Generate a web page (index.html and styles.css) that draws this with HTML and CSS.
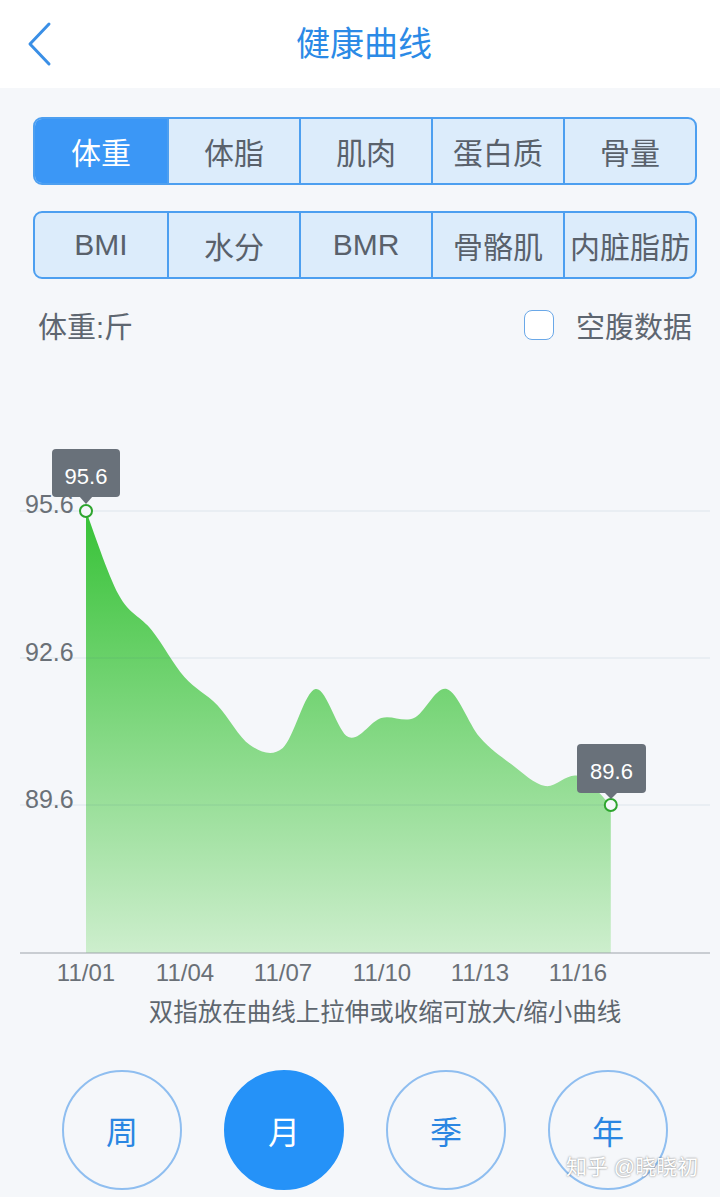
FILE: index.html
```html
<!DOCTYPE html>
<html lang="zh-CN">
<head>
  <meta charset="UTF-8">
  <meta name="viewport" content="width=device-width, initial-scale=1.0">
  <title>健康曲线</title>
  <link rel="stylesheet" href="styles.css">
</head>
<body>
  <header class="nav">
    <svg class="nav-back" width="30" height="46" viewBox="0 0 30 46">
      <polyline points="23,3 4,23 23,43"/>
    </svg>
    <h1 class="nav-title">健康曲线</h1>
  </header>

  <main class="page">
    <div class="tabs">
      <span class="tab tab-active">体重</span>
      <span class="tab">体脂</span>
      <span class="tab">肌肉</span>
      <span class="tab">蛋白质</span>
      <span class="tab">骨量</span>
    </div>
    <div class="tabs tabs-second">
      <span class="tab">BMI</span>
      <span class="tab">水分</span>
      <span class="tab">BMR</span>
      <span class="tab">骨骼肌</span>
      <span class="tab">内脏脂肪</span>
    </div>

    <div class="unit-row">
      <span class="unit">体重:斤</span>
      <label class="fasting"><span class="check"></span>空腹数据</label>
    </div>

    <!-- curve, drawn in page coordinates -->
    <svg class="chart" width="720" height="640" viewBox="0 355 720 640">
      <defs>
        <linearGradient id="area" x1="0" y1="511" x2="0" y2="953" gradientUnits="userSpaceOnUse">
          <stop offset="0" stop-color="#37c237"/>
          <stop offset="1" stop-color="#cdeecd"/>
        </linearGradient>
      </defs>

      <path class="area" d="M86,511 C91.5,525 107.9,575.2 118.8,595 C129.7,614.8 140.7,616.3 151.6,630 C162.5,643.7 173.5,664.5 184.4,677 C195.3,689.5 206.3,693.7 217.2,705 C228.1,716.3 239.1,737.8 250,745 C260.9,752.2 271.9,757.3 282.8,748 C293.7,738.7 304.7,690.8 315.6,689 C326.5,687.2 337.5,732.2 348.4,737 C359.3,741.8 370.3,721.2 381.2,718 C392.1,714.8 403.1,722.8 414,718 C424.9,713.2 435.9,685.8 446.8,689 C457.7,692.2 468.7,724.3 479.6,737 C490.5,749.7 501.5,756.8 512.4,765 C523.3,773.2 534.3,784.2 545.2,786 C556.1,787.8 567.1,772.8 578,776 C588.9,779.2 605.3,800.2 610.8,805 L610.8,953 L86,953 Z"/>

      <g class="grid">
        <line x1="20" y1="511" x2="710" y2="511"/>
        <line x1="20" y1="658" x2="710" y2="658"/>
        <line x1="20" y1="805" x2="710" y2="805"/>
      </g>
      <line class="axis" x1="20" y1="953" x2="710" y2="953"/>

      <g class="y-labels">
        <text x="25" y="513">95.6</text>
        <text x="25" y="661">92.6</text>
        <text x="25" y="808">89.6</text>
      </g>

      <g class="x-labels">
        <text x="86" y="981">11/01</text>
        <text x="185" y="981">11/04</text>
        <text x="283" y="981">11/07</text>
        <text x="382" y="981">11/10</text>
        <text x="480" y="981">11/13</text>
        <text x="578" y="981">11/16</text>
      </g>

      <circle class="dot" cx="86" cy="511" r="6"/>
      <circle class="dot" cx="610.8" cy="805" r="6"/>

      <g class="tip">
        <rect x="52" y="449" width="68" height="48" rx="4"/>
        <polygon points="79,496 93,496 86,504"/>
        <text x="86" y="484">95.6</text>
      </g>
      <g class="tip">
        <rect x="577" y="744" width="69" height="49" rx="4"/>
        <polygon points="604,792 618,792 611,799"/>
        <text x="611.5" y="779">89.6</text>
      </g>
    </svg>

    <p class="hint">双指放在曲线上拉伸或收缩可放大/缩小曲线</p>

    <div class="ranges">
      <span class="range">周</span>
      <span class="range range-active">月</span>
      <span class="range">季</span>
      <span class="range">年</span>
    </div>
  </main>

  <div class="watermark">知乎 @晓晓初</div>
</body>
</html>
```

FILE: styles.css
```css
body {
  margin: 0;
  background: #f5f7fa;
  font-family: "Liberation Sans", "Noto Sans CJK SC", sans-serif;
  color: #5b636c;
  position: relative;
  min-height: 1197px;
}
.nav {
  display: grid;
  grid-template-columns: 88px 1fr 88px;
  align-items: center;
  height: 88px;
  background: #fff;
}
.nav-back {
  margin-left: 26px;
}
.nav-back polyline {
  fill: none;
  stroke: #3a8fe6;
  stroke-width: 3;
  stroke-linecap: round;
  stroke-linejoin: round;
}
.nav-title {
  margin: 0 0 6px;
  padding-left: 8px;
  text-align: center;
  font-size: 34px;
  font-weight: normal;
  color: #2b8ae6;
}
.page {
  padding-top: 29px;
}
.tabs {
  display: grid;
  grid-template-columns: repeat(5, 1fr);
  height: 68px;
  margin: 0 23px 0 33px;
  box-sizing: border-box;
  border: 2px solid #4d9ff0;
  border-radius: 9px;
  overflow: hidden;
  background: #dcecfb;
}
.tabs-second {
  margin-top: 26px;
}
.tab {
  display: flex;
  align-items: center;
  justify-content: center;
  border-left: 2px solid #4d9ff0;
  font-size: 30px;
  color: #59616b;
}
.tab:first-child {
  border-left: none;
}
.tab-active {
  background: #3b97f6;
  color: #fff;
}
.unit-row {
  display: flex;
  align-items: center;
  justify-content: space-between;
  height: 60px;
  margin-top: 16px;
  padding: 0 28px 0 38px;
  font-size: 29px;
  color: #5e6670;
}
.fasting {
  display: flex;
  align-items: center;
}
.check {
  width: 30px;
  height: 30px;
  box-sizing: border-box;
  border: 1.5px solid #6aa8e8;
  border-radius: 8px;
  margin-right: 22px;
  background: #fff;
}
.chart {
  display: block;
}
.area {
  fill: url(#area);
}
.grid line {
  stroke: rgba(60, 100, 140, 0.12);
  stroke-width: 1;
}
.axis {
  stroke: #9ea4aa;
  stroke-width: 1.2;
}
.y-labels text {
  font-size: 25px;
  fill: #6a7077;
}
.x-labels text {
  font-size: 24px;
  fill: #6a7077;
  text-anchor: middle;
}
.dot {
  fill: #f5f7fa;
  stroke: #2ea52e;
  stroke-width: 2;
}
.tip rect,
.tip polygon {
  fill: #69717a;
}
.tip text {
  font-size: 22px;
  fill: #fff;
  text-anchor: middle;
}
.hint {
  margin: 0;
  height: 36px;
  line-height: 36px;
  padding-left: 50px;
  text-align: center;
  font-size: 24.5px;
  color: #5e666e;
}
.ranges {
  display: flex;
  gap: 42px;
  margin-top: 39px;
  padding-left: 62px;
}
.range {
  display: flex;
  align-items: center;
  justify-content: center;
  width: 120px;
  height: 120px;
  box-sizing: border-box;
  border: 2px solid #8fbef0;
  border-radius: 50%;
  font-size: 32px;
  color: #2a86e2;
}
.range-active {
  background: #2592f8;
  border-color: #2592f8;
  color: #fff;
}
.watermark {
  position: absolute;
  left: 566px;
  top: 1150px;
  font-size: 21px;
  color: #fff;
  text-shadow: 0 0 2px rgba(0, 0, 0, 0.55);
}
```
